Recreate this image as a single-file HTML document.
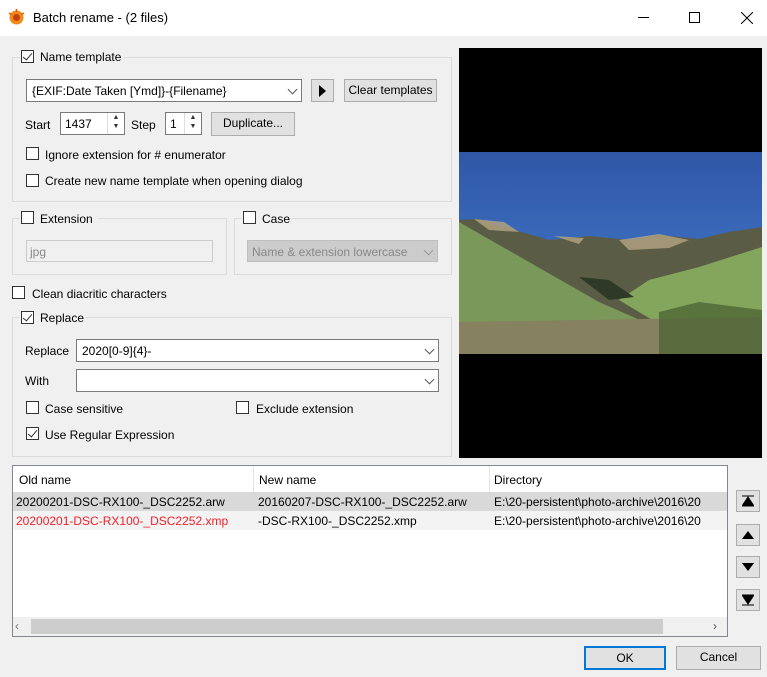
<!DOCTYPE html>
<html><head><style>
*{box-sizing:border-box;margin:0;padding:0}
body{width:767px;height:677px;background:#f0f0f0;font-family:"Liberation Sans",sans-serif;font-size:12px;color:#000;position:relative;overflow:hidden}
.a{position:absolute}
.t{position:absolute;white-space:nowrap;line-height:14px}
.grp{position:absolute;border:1px solid #dcdcdc}
.cb{position:absolute;width:13px;height:13px;border:1px solid #333;background:#fff}
.cb.on::after{content:"";position:absolute;left:3px;top:0px;width:4px;height:8px;border:solid #333;border-width:0 1.5px 1.5px 0;transform:rotate(40deg)}
.inp{position:absolute;background:#fff;border:1px solid #7a7a7a}
.btn{position:absolute;background:#e1e1e1;border:1px solid #adadad;text-align:center;line-height:20px}
.chev{position:absolute;right:5px;top:6px;width:7px;height:7px;border:solid #555;border-width:0 1px 1px 0;transform:rotate(45deg)}
.spin{position:absolute;right:0;top:0;width:17px;height:100%;border-left:1px solid #ddd;font-size:7px;text-align:center;line-height:9px;color:#333}
</style></head><body>
<div class="a" style="left:0;top:0;width:767px;height:36px;background:#fff"></div>
<svg class="a" style="left:8px;top:9px" width="17" height="17" viewBox="0 0 17 17"><circle cx="8.5" cy="8.5" r="7" fill="#f08a1c"/><circle cx="8.5" cy="8.5" r="3.5" fill="#c2410c"/><g stroke="#e65c00" stroke-width="1.5"><line x1="8.5" y1="0" x2="8.5" y2="3"/><line x1="1" y1="4" x2="3.5" y2="5.5"/><line x1="16" y1="4" x2="13.5" y2="5.5"/></g></svg>
<div class="t" style="left:33px;top:11px;font-size:13px">Batch rename - (2 files)</div>
<div class="a" style="left:638px;top:17px;width:11px;height:1px;background:#000"></div>
<div class="a" style="left:689px;top:12px;width:11px;height:11px;border:1px solid #000"></div>
<svg class="a" style="left:741px;top:12px" width="12" height="12"><path d="M0 0L12 12M12 0L0 12" stroke="#000" stroke-width="1"/></svg>

<div class="grp" style="left:12px;top:57px;width:440px;height:145px"></div>
<div class="a" style="left:20px;top:50px;width:104px;height:14px;background:#f0f0f0"></div>
<div class="cb on" style="left:21px;top:50px"></div><div class="t" style="left:40px;top:50px">Name template</div>
<div class="inp" style="left:26px;top:79px;width:276px;height:23px"><div class="t" style="left:5px;top:4px">{EXIF:Date Taken [Ymd]}-{Filename}</div><div class="chev"></div></div>
<div class="btn" style="left:311px;top:79px;width:23px;height:23px"><svg width="9" height="12" style="margin-top:5px"><path d="M1 0L8 6L1 12Z"/></svg></div>
<div class="btn" style="left:344px;top:79px;width:93px;height:23px">Clear templates</div>
<div class="t" style="left:25px;top:118px">Start</div>
<div class="inp" style="left:60px;top:112px;width:65px;height:23px"><div class="t" style="left:4px;top:4px">1437</div><div class="spin">▲<br>▼</div></div>
<div class="t" style="left:131px;top:118px">Step</div>
<div class="inp" style="left:165px;top:112px;width:37px;height:23px"><div class="t" style="left:4px;top:4px">1</div><div class="spin">▲<br>▼</div></div>
<div class="btn" style="left:211px;top:112px;width:84px;height:24px">Duplicate...</div>
<div class="cb" style="left:26px;top:147px"></div><div class="t" style="left:45px;top:148px">Ignore extension for # enumerator</div>
<div class="cb" style="left:26px;top:174px"></div><div class="t" style="left:45px;top:174px">Create new name template when opening dialog</div>

<div class="grp" style="left:12px;top:218px;width:215px;height:57px"></div>
<div class="a" style="left:20px;top:211px;width:78px;height:14px;background:#f0f0f0"></div>
<div class="cb" style="left:21px;top:211px"></div><div class="t" style="left:40px;top:212px">Extension</div>
<div class="inp" style="left:26px;top:240px;width:187px;height:22px;border-color:#ccc;background:#f0f0f0"><div class="t" style="left:3px;top:4px;color:#888">jpg</div></div>
<div class="grp" style="left:234px;top:218px;width:218px;height:57px"></div>
<div class="a" style="left:242px;top:211px;width:50px;height:14px;background:#f0f0f0"></div>
<div class="cb" style="left:243px;top:211px"></div><div class="t" style="left:262px;top:212px">Case</div>
<div class="a" style="left:247px;top:240px;width:191px;height:22px;background:#ccc;border:1px solid #bfbfbf"><div class="t" style="left:4px;top:4px;color:#888">Name &amp; extension lowercase</div><div class="chev" style="border-color:#999"></div></div>

<div class="cb" style="left:12px;top:286px"></div><div class="t" style="left:32px;top:287px">Clean diacritic characters</div>

<div class="grp" style="left:12px;top:317px;width:440px;height:140px"></div>
<div class="a" style="left:20px;top:311px;width:66px;height:14px;background:#f0f0f0"></div>
<div class="cb on" style="left:21px;top:311px"></div><div class="t" style="left:40px;top:311px">Replace</div>
<div class="t" style="left:25px;top:344px">Replace</div>
<div class="inp" style="left:76px;top:339px;width:363px;height:23px"><div class="t" style="left:5px;top:4px">2020[0-9]{4}-</div><div class="chev"></div></div>
<div class="t" style="left:25px;top:374px">With</div>
<div class="inp" style="left:76px;top:369px;width:363px;height:23px"><div class="chev"></div></div>
<div class="cb" style="left:26px;top:401px"></div><div class="t" style="left:45px;top:402px">Case sensitive</div>
<div class="cb" style="left:236px;top:401px"></div><div class="t" style="left:256px;top:402px">Exclude extension</div>
<div class="cb on" style="left:26px;top:427px"></div><div class="t" style="left:45px;top:428px">Use Regular Expression</div>

<div class="a" style="left:459px;top:48px;width:303px;height:410px;background:#000"></div>
<svg class="a" style="left:459px;top:152px" width="303" height="202" viewBox="0 0 303 202" preserveAspectRatio="none">
<defs><linearGradient id="s" x1="0" y1="0" x2="0" y2="1"><stop offset="0" stop-color="#2f57a6"/><stop offset="1" stop-color="#4a80d2"/></linearGradient></defs>
<rect width="303" height="202" fill="url(#s)"/>
<path d="M0 68L20 67L45 75L90 88L130 84L170 88L200 83L240 87L270 80L303 75L303 202L0 202Z" fill="#5a5c46"/>
<path d="M15 67L45 70L60 80L30 78Z M95 84L125 86L120 92Z M160 88L200 82L230 88L210 96L170 98Z" fill="#b5a582" opacity=".8"/>
<path d="M0 70L70 110L140 150L190 172L190 202L0 202Z" fill="#7a985a"/>
<path d="M303 95L240 115L190 128L160 148L200 172L303 172Z" fill="#84a65c"/>
<path d="M120 125L150 128L175 145L150 148Z" fill="#2e3a25"/>
<path d="M0 170L303 165L303 202L0 202Z" fill="#86815f"/>
<path d="M200 160L240 150L303 158L303 202L200 202Z" fill="#4f6636" opacity=".8"/>
</svg>

<div class="a" style="left:12px;top:465px;width:716px;height:172px;background:#fff;border:1px solid #828790"></div>
<div class="a" style="left:13px;top:466px;width:714px;height:26px;background:#fff"></div>
<div class="a" style="left:253px;top:466px;width:1px;height:26px;background:#e5e5e5"></div>
<div class="a" style="left:489px;top:466px;width:1px;height:26px;background:#e5e5e5"></div>
<div class="t" style="left:19px;top:473px">Old name</div><div class="t" style="left:259px;top:473px">New name</div><div class="t" style="left:494px;top:473px">Directory</div>
<div class="a" style="left:13px;top:492px;width:714px;height:19px;background:#d9d9d9"></div>
<div class="a" style="left:13px;top:511px;width:714px;height:19px;background:#f3f3f3"></div>
<div class="a" style="left:13px;top:492px;width:714px;height:38px;overflow:hidden">
<div class="t" style="left:3px;top:3px">20200201-DSC-RX100-_DSC2252.arw</div><div class="t" style="left:245px;top:3px">20160207-DSC-RX100-_DSC2252.arw</div><div class="t" style="left:481px;top:3px">E:\20-persistent\photo-archive\2016\20</div>
<div class="t" style="left:3px;top:22px;color:#f0202a">20200201-DSC-RX100-_DSC2252.xmp</div><div class="t" style="left:245px;top:22px">-DSC-RX100-_DSC2252.xmp</div><div class="t" style="left:481px;top:22px">E:\20-persistent\photo-archive\2016\20</div>
</div>
<div class="a" style="left:13px;top:617px;width:714px;height:19px;background:#f0f0f0"></div>
<div class="a" style="left:31px;top:619px;width:632px;height:15px;background:#cdcdcd"></div>
<div class="t" style="left:15px;top:619px;color:#777">‹</div><div class="t" style="left:713px;top:619px;color:#555">›</div>

<div class="btn" style="left:736px;top:490px;width:24px;height:22px"><svg width="12" height="12" style="margin-top:4px"><path d="M0 1H12M6 2L0 11H12Z" stroke="#000" fill="#000"/></svg></div>
<div class="btn" style="left:736px;top:524px;width:24px;height:22px"><svg width="12" height="10" style="margin-top:5px"><path d="M6 1L0 9H12Z"/></svg></div>
<div class="btn" style="left:736px;top:556px;width:24px;height:22px"><svg width="12" height="10" style="margin-top:5px"><path d="M0 1H12L6 9Z"/></svg></div>
<div class="btn" style="left:736px;top:589px;width:24px;height:22px"><svg width="12" height="12" style="margin-top:4px"><path d="M0 1H12L6 10ZM0 11H12" stroke="#000" fill="#000"/></svg></div>

<div class="btn" style="left:584px;top:646px;width:82px;height:24px;border:2px solid #0078d7;line-height:20px">OK</div>
<div class="btn" style="left:676px;top:646px;width:85px;height:24px">Cancel</div>
</body></html>
